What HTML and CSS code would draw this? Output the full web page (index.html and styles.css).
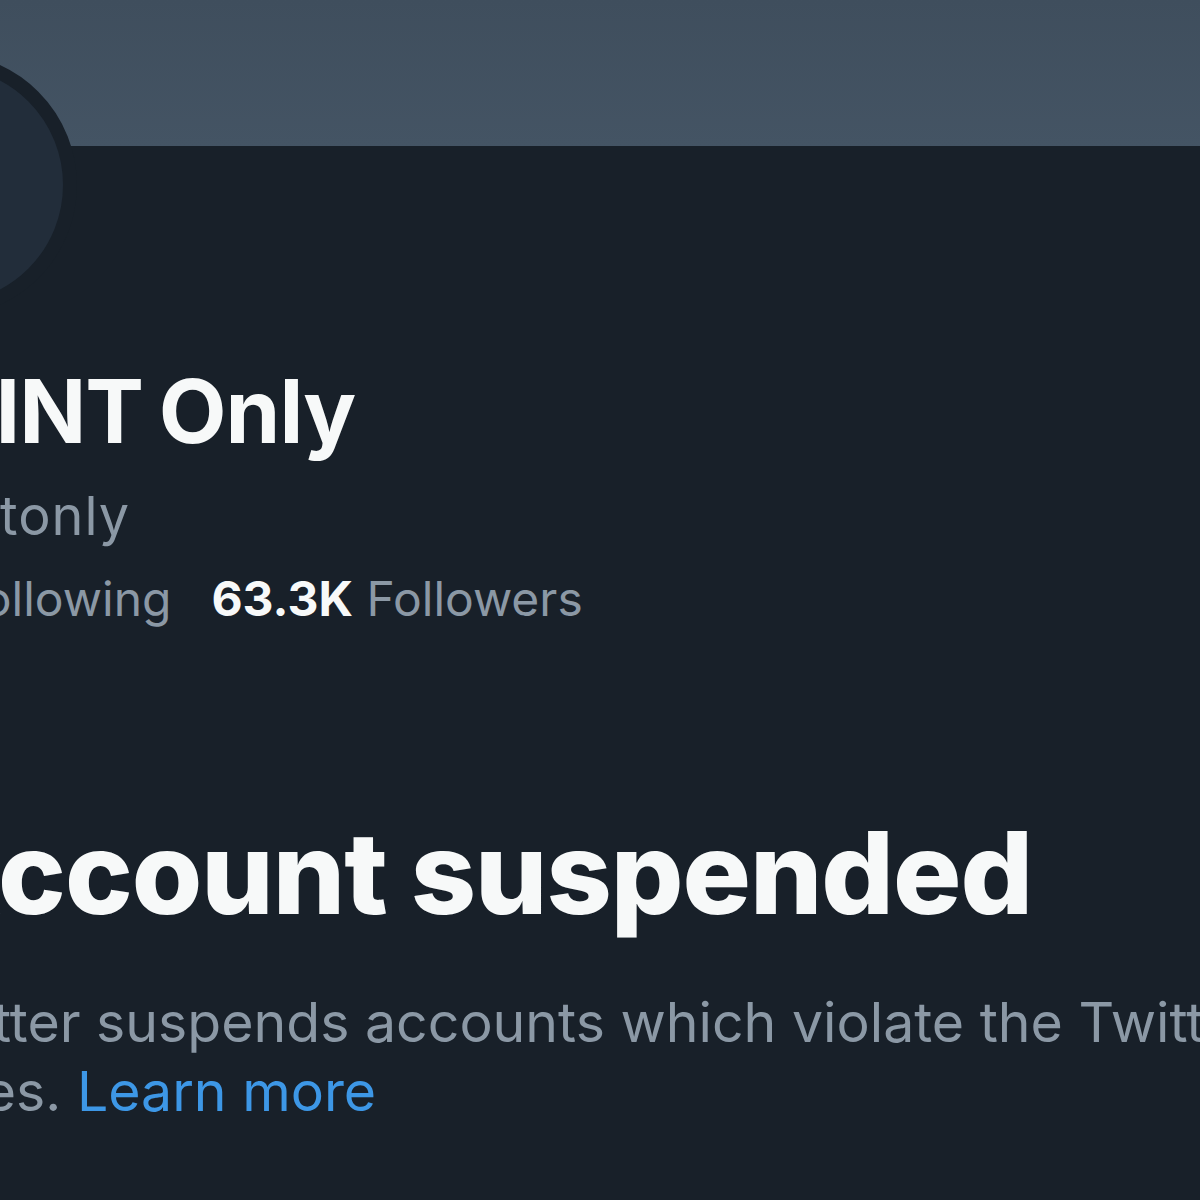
FILE: index.html
```html
<!DOCTYPE html>
<html lang="en">
<head>
<meta charset="utf-8">
<title>Account suspended</title>
<link rel="stylesheet" href="styles.css">
</head>
<body>
<div class="page">
  <div class="banner"></div>
  <div class="avatar"></div>
  <div class="profile">
    <h1 class="name">OSINT Only</h1>
    <div class="handle">@osintonly</div>
    <div class="stats">
      <span class="stat"><b>1,027</b> Following</span>
      <span class="stat"><b>63.3K</b> Followers</span>
    </div>
    <h2 class="headline">Account suspended</h2>
    <p class="notice">Twitter suspends accounts which violate the Twitter Rules. <a href="#" class="link">Learn more</a></p>
  </div>
</div>
</body>
</html>
```
FILE: styles.css
```css
html, body {
  margin: 0;
  padding: 0;
  background: #182029;
}
body {
  width: 1200px;
  height: 1200px;
  overflow: hidden;
  font-family: Inter, "Liberation Sans", sans-serif;
  color: #f7f9f9;
}
.page {
  position: relative;
  width: 1200px;
  height: 1200px;
  overflow: hidden;
}
.banner {
  height: 146px;
  background: linear-gradient(#3f4e5d, #445464);
}
.avatar {
  position: absolute;
  left: -187px;
  top: 53px;
  width: 264px;
  height: 264px;
  box-sizing: border-box;
  border-radius: 50%;
  border: 14px solid #182029;
  background: #222d3a;
}
.profile {
  width: 1500px;
}
.name {
  margin: 217px 0 0 -128px;
  font-size: 88px;
  line-height: 96px;
  font-weight: 700;
  letter-spacing: -1px;
  word-spacing: -4px;
  white-space: nowrap;
}
.handle {
  margin: 22px 0 0 -163px;
  font-size: 54px;
  line-height: 69px;
  letter-spacing: 1px;
  color: #8b98a5;
}
.stats {
  margin: 21px 0 0 -183px;
  display: flex;
  gap: 40px;
  font-size: 48px;
  line-height: 55px;
  color: #8b98a5;
}
.stat b {
  color: #f7f9f9;
  font-weight: 700;
}
.headline {
  margin: 185px 0 0 -85px;
  font-size: 114px;
  line-height: 124px;
  font-weight: 800;
  letter-spacing: -1px;
  white-space: nowrap;
}
.notice {
  margin: 52px 0 0 -98px;
  width: 1420px;
  font-size: 55.4px;
  line-height: 69px;
  color: #8b98a5;
}
.link {
  color: #3d97e6;
  text-decoration: none;
}
```
